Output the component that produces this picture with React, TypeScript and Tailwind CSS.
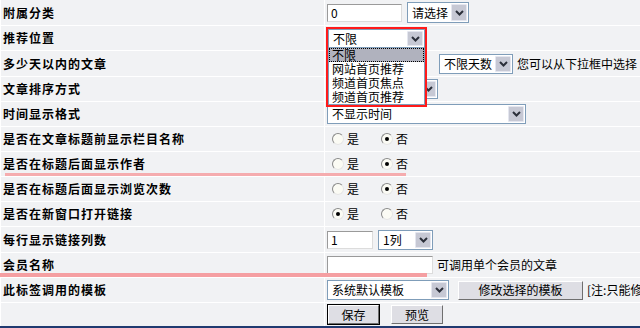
import React from "react";

const FONT = "font-['SimSun','Noto_Sans_CJK_SC',sans-serif]";

function Chevron() {
  return (
    <svg width="9" height="6" viewBox="0 0 9 6" className="block">
      <path d="M1 1 L4.5 4.5 L8 1" fill="none" stroke="#2b2f3a" strokeWidth="2" />
    </svg>
  );
}

function Select({ w, label, h = "h-[20px]" }: { w: string; label: string; h?: string }) {
  return (
    <div className={`${w} ${h} flex border border-[#7f9db9] bg-white`}>
      <div className="flex-1 flex items-center pl-[4px] text-[12px] leading-none text-black whitespace-nowrap overflow-hidden">
        {label}
      </div>
      <div className="w-[16px] m-px flex items-center justify-center bg-[#c6c8d4] border border-[#e4e6ef] rounded-[1px]">
        <Chevron />
      </div>
    </div>
  );
}

function TextBox({ w, value = "" }: { w: string; value?: string }) {
  return (
    <div className={`${w} h-[18px] flex items-center pl-[3px] bg-white border border-t-[#9a9a9a] border-l-[#9a9a9a] border-b-[#dcdcdc] border-r-[#dcdcdc] text-[12px] leading-none`}>
      {value}
    </div>
  );
}

function Radio({ checked }: { checked?: boolean }) {
  return (
    <div className="w-[12px] h-[12px] rounded-full border border-t-[#8a8a8a] border-l-[#8a8a8a] border-b-[#e6e6e6] border-r-[#e6e6e6] bg-[#fbfbf4] flex items-center justify-center">
      {checked && <div className="w-[4px] h-[4px] rounded-full bg-black" />}
    </div>
  );
}

function YesNo({ yes }: { yes: boolean }) {
  return (
    <div className="flex items-center text-[12px]">
      <div className="ml-[5px]"><Radio checked={yes} /></div>
      <span className="ml-[3px]">是</span>
      <div className="ml-[22px]"><Radio checked={!yes} /></div>
      <span className="ml-[3px]">否</span>
    </div>
  );
}

function Button({ w, label, def }: { w: string; label: string; def?: boolean }) {
  const inner = (
    <div className={`${def ? "w-full h-full" : w + " h-[19px]"} flex items-center justify-center bg-[#dedee4] border border-t-white border-l-white border-b-[#6f6f6f] border-r-[#6f6f6f] text-[12px] leading-none`}>
      {label}
    </div>
  );
  if (def) return <div className={`${w} h-[21px] border border-black`}>{inner}</div>;
  return inner;
}

const rows: { label: string; h: string; content: React.ReactNode }[] = [
  {
    label: "附属分类",
    h: "h-[25px]",
    content: (
      <div className="flex items-center gap-[5px]">
        <TextBox w="w-[75px]" value="0" />
        <Select w="w-[62px]" label="请选择" h="h-[21px]" />
      </div>
    ),
  },
  { label: "推荐位置", h: "h-[24px]", content: <Select w="w-[98px]" label="不限" /> },
  {
    label: "多少天以内的文章",
    h: "h-[25px]",
    content: (
      <div className="flex items-center">
        <TextBox w="w-[90px]" value="" />
        <div className="ml-[22px]"><Select w="w-[74px]" label="不限天数" /></div>
        <span className="ml-[4px] text-[12px] whitespace-nowrap">您可以从下拉框中选择</span>
      </div>
    ),
  },
  { label: "文章排序方式", h: "h-[24px]", content: <Select w="w-[111px]" label="" /> },
  { label: "时间显示格式", h: "h-[24px]", content: <Select w="w-[199px]" label="不显示时间" /> },
  { label: "是否在文章标题前显示栏目名称", h: "h-[24px]", content: <YesNo yes={false} /> },
  { label: "是否在标题后面显示作者", h: "h-[24px]", content: <YesNo yes={false} /> },
  { label: "是否在标题后面显示浏览次数", h: "h-[24px]", content: <YesNo yes={false} /> },
  { label: "是否在新窗口打开链接", h: "h-[24px]", content: <YesNo yes={true} /> },
  {
    label: "每行显示链接列数",
    h: "h-[25px]",
    content: (
      <div className="flex items-center gap-[5px]">
        <TextBox w="w-[46px]" value="1" />
        <Select w="w-[55px]" label="1列" />
      </div>
    ),
  },
  {
    label: "会员名称",
    h: "h-[24px]",
    content: (
      <div className="flex items-center">
        <TextBox w="w-[106px]" />
        <span className="ml-[4px] text-[12px] whitespace-nowrap">可调用单个会员的文章</span>
      </div>
    ),
  },
  {
    label: "此标签调用的模板",
    h: "h-[24px]",
    content: (
      <div className="flex items-center">
        <Select w="w-[122px]" label="系统默认模板" />
        <div className="ml-[9px]"><Button w="w-[125px]" label="修改选择的模板" /></div>
        <span className="ml-[4px] text-[12px] whitespace-nowrap">[注:只能修</span>
      </div>
    ),
  },
  {
    label: "",
    h: "h-[23px]",
    content: (
      <div className="flex items-center">
        <Button w="w-[53px]" label="保存" def />
        <div className="ml-[11px]"><Button w="w-[52px]" label="预览" /></div>
      </div>
    ),
  },
];

const OPTIONS = ["网站首页推荐", "频道首页焦点", "频道首页推荐"];

export default function App() {
  return (
    <div className={`relative w-[640px] h-[328px] overflow-hidden bg-white text-black ${FONT}`}>
      <div className="flex flex-col gap-px">
        {rows.map((r, i) => (
          <div key={i} className={`grid grid-cols-[323px_1fr] gap-px pl-px ${r.h}`}>
            <div className="bg-[#f1f2f4] flex items-center pl-[2px] text-[12px] font-bold tracking-[1px] whitespace-nowrap">
              {r.label}
            </div>
            <div className="bg-[#f1f2f4] flex items-center pl-[2px] overflow-hidden">{r.content}</div>
          </div>
        ))}
      </div>
      <div className="absolute left-0 right-0 bottom-0 h-[2px] bg-[#203a70]" />

      {/* open dropdown, annotated with a red frame */}
      <div className="absolute left-[326px] top-[27px] w-[101px] h-[80px] border-2 border-[#ff1a1a] bg-white flex flex-col">
        <Select w="w-full" label="不限" h="h-[19px]" />
        <div className="flex-1 flex flex-col border border-t-0 border-[#7f9db9]">
          <div className="h-[14px] pl-[2px] bg-[#b0b2be] border border-dotted border-black flex items-center text-[12px] leading-[12px]">
            不限
          </div>
          {OPTIONS.map((o) => (
            <div key={o} className="h-[14px] pl-[3px] flex items-center text-[12px] leading-[12px] whitespace-nowrap">
              {o}
            </div>
          ))}
        </div>
      </div>

      {/* pink highlight strokes */}
      <div className="absolute left-[5px] top-[173px] w-[401px] h-[3px] bg-[#f5a4a6] opacity-90" />
      <div className="absolute left-0 top-[273px] w-[427px] h-[4px] bg-[#f59fa2]" />
    </div>
  );
}
